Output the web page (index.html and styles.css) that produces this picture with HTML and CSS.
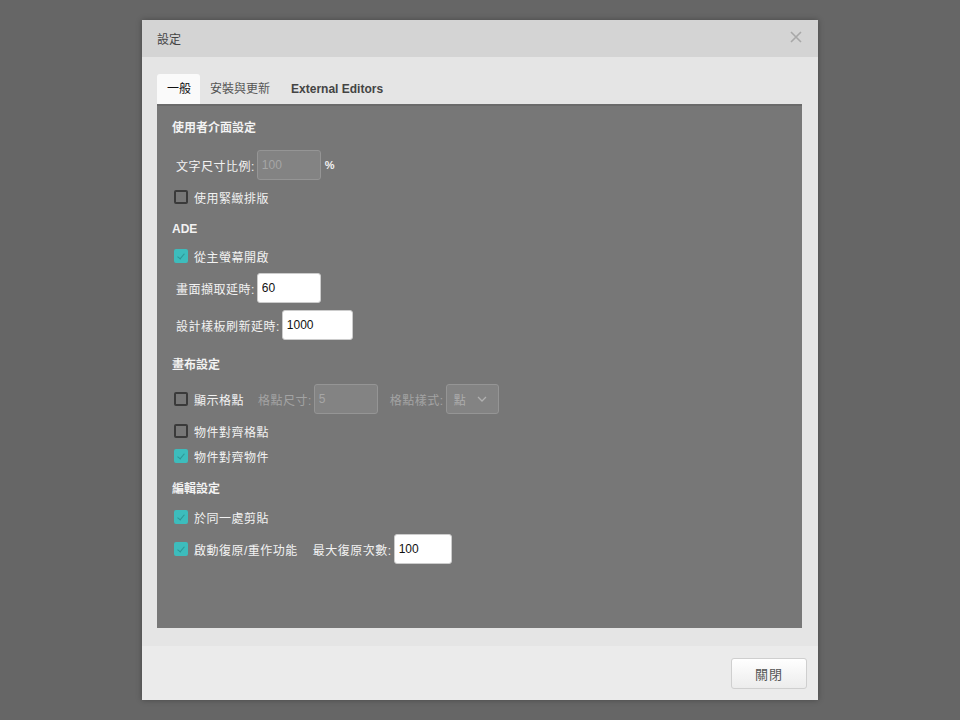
FILE: index.html
```html
<!DOCTYPE html>
<html>
<head>
    <title>設定</title>
    <link rel="stylesheet" href="styles.css">
</head>
<body>
    <div class="dialog">
        <div class="dialog-header">
            <span class="dialog-title">設定</span>
            <svg class="close-icon" width="12" height="12" viewBox="0 0 12 12">
                <path d="M1 1 L11 11 M11 1 L1 11" stroke="#a8a8a8" stroke-width="1.6" fill="none"/>
            </svg>
        </div>
        <div class="dialog-body">
            <div class="tabs">
                <div class="tab active">一般</div>
                <div class="tab">安裝與更新</div>
                <div class="tab tab-bold">External Editors</div>
            </div>
            <div class="panel">
                <div class="section-title first">使用者介面設定</div>
                <div class="item field-row">
                    <span class="field-label">文字尺寸比例:</span>
                    <input type="text" class="text-input disabled" value="100" style="width:64px" disabled>
                    <span class="unit">%</span>
                </div>
                <label class="item check-row">
                    <span class="checkbox"></span>
                    <span>使用緊緻排版</span>
                </label>

                <div class="section-title">ADE</div>
                <label class="item check-row close">
                    <span class="checkbox checked"></span>
                    <span>從主螢幕開啟</span>
                </label>
                <div class="item field-row">
                    <span class="field-label">畫面擷取延時:</span>
                    <input type="text" class="text-input" value="60" style="width:64px">
                </div>
                <div class="item field-row">
                    <span class="field-label">設計樣板刷新延時:</span>
                    <input type="text" class="text-input" value="1000" style="width:71px">
                </div>

                <div class="section-title canvas-title">畫布設定</div>
                <div class="item field-row">
                    <span class="checkbox"></span>
                    <span class="check-text">顯示格點</span>
                    <span class="field-label muted">格點尺寸:</span>
                    <input type="text" class="text-input disabled" value="5" style="width:64px" disabled>
                    <span class="field-label muted spaced">格點樣式:</span>
                    <div class="select disabled">
                        <span>點</span>
                        <svg width="10" height="6" viewBox="0 0 10 6">
                            <path d="M1 1 L5 5 L9 1" stroke="#b0b0b0" stroke-width="1.3" fill="none"/>
                        </svg>
                    </div>
                </div>
                <label class="item check-row">
                    <span class="checkbox"></span>
                    <span>物件對齊格點</span>
                </label>
                <label class="item check-row tight">
                    <span class="checkbox checked"></span>
                    <span>物件對齊物件</span>
                </label>

                <div class="section-title edit-title">編輯設定</div>
                <label class="item check-row close">
                    <span class="checkbox checked"></span>
                    <span>於同一處剪貼</span>
                </label>
                <div class="item field-row">
                    <span class="checkbox checked"></span>
                    <span class="check-text">啟動復原/重作功能</span>
                    <span class="field-label spaced-sm">最大復原次數:</span>
                    <input type="text" class="text-input" value="100" style="width:58px">
                </div>
            </div>
        </div>
        <div class="dialog-footer">
            <button class="close-button">關閉</button>
        </div>
    </div>
</body>
</html>
```

FILE: styles.css
```css
html, body {
    margin: 0;
    padding: 0;
}
body {
    background-color: #666666;
    height: 100vh;
    display: flex;
    align-items: center;
    justify-content: center;
    font-family: "Liberation Sans", "Noto Sans CJK TC", sans-serif;
    font-size: 12px;
}
.dialog {
    width: 676px;
    height: 680px;
    background-color: #e5e5e5;
    display: flex;
    flex-direction: column;
    box-shadow: 0 0 6px rgba(0, 0, 0, 0.3);
}
.dialog-header {
    height: 37px;
    background-color: #d4d4d4;
    display: flex;
    align-items: center;
    justify-content: space-between;
    padding: 0 16px 0 15px;
    flex-shrink: 0;
}
.dialog-title {
    color: #444;
    font-size: 12px;
    margin-top: -1px;
}
.close-icon {
    margin-top: -4px;
}
.dialog-body {
    flex: 1;
    padding: 17px 16px 18px 15px;
    display: flex;
    flex-direction: column;
}
.tabs {
    display: flex;
    height: 30px;
}
.tab {
    padding: 0 10px;
    line-height: 30px;
    color: #555;
    font-size: 12px;
}
.tab.active {
    background-color: #fafafa;
    color: #111;
    border-radius: 3px 3px 0 0;
    padding: 0 9px 0 10px;
}
.tab-bold {
    font-weight: bold;
    color: #444;
    padding-left: 11px;
}
.panel {
    flex: 1;
    background-color: #777777;
    border-top: 2px solid #6a6a6a;
    padding: 12px 15px 0 15px;
    color: #f2f2f2;
}
.section-title {
    height: 20px;
    line-height: 20px;
    font-weight: bold;
    font-size: 12px;
    margin-top: 12px;
}
.section-title.first {
    margin-top: 0;
}
.section-title.canvas-title {
    margin-top: 15px;
}
.section-title.edit-title {
    margin-top: 13px;
}
.item {
    display: flex;
    align-items: center;
    margin-top: 7px;
}
.section-title + .item {
    margin-top: 9px;
}
.check-row {
    height: 20px;
    padding-left: 2px;
}
.section-title + .check-row.close {
    margin-top: 7px;
}
.edit-title + .check-row.close {
    margin-top: 8px;
}
.check-row.tight {
    margin-top: 5px;
}
.field-row {
    height: 30px;
    padding-left: 2px;
}
.section-title + .field-row:not(:has(.checkbox)) {
    margin-top: 12px;
}
.field-label {
    margin-left: 2px;
    margin-right: 2px;
    letter-spacing: 0.5px;
}
.field-label.muted {
    color: #a3a3a3;
}
.field-label.spaced {
    margin-left: 12px;
}
.field-label.spaced-sm {
    margin-left: 3px;
}
.checkbox {
    width: 10px;
    height: 10px;
    border: 2px solid #3a3a3a;
    border-radius: 2px;
    margin-right: 6px;
    position: relative;
    flex-shrink: 0;
}
.checkbox.checked {
    background-color: #3dbcbc;
    border-color: #3dbcbc;
}
.checkbox.checked::after {
    content: "";
    position: absolute;
    left: 3px;
    top: 1px;
    width: 3px;
    height: 6px;
    border-right: 1px solid #2c9494;
    border-bottom: 1px solid #2c9494;
    transform: rotate(40deg);
}
.check-row span:last-child,
.check-text {
    letter-spacing: 0.5px;
}
.check-text {
    margin-right: 12px;
}
.text-input {
    height: 30px;
    box-sizing: border-box;
    border: 1px solid #cccccc;
    border-radius: 3px;
    background-color: #ffffff;
    padding: 0 4px;
    font-family: "Liberation Sans", sans-serif;
    font-size: 12px;
    color: #111;
}
.text-input.disabled {
    background-color: #838383;
    border-color: #959595;
    color: #a6a6a6;
}
.unit {
    margin-left: 4px;
    font-weight: bold;
    font-size: 11px;
}
.select {
    width: 53px;
    height: 30px;
    box-sizing: border-box;
    border: 1px solid #959595;
    border-radius: 3px;
    background-color: #838383;
    color: #acacac;
    display: flex;
    align-items: center;
    justify-content: space-between;
    padding: 0 11px 0 7px;
}
.dialog-footer {
    height: 54px;
    background-color: #ebebeb;
    display: flex;
    align-items: center;
    justify-content: flex-end;
    padding-right: 11px;
    flex-shrink: 0;
}
.close-button {
    width: 76px;
    height: 31px;
    border: 1px solid #cfcfcf;
    border-radius: 3px;
    background: linear-gradient(#ffffff, #ececec);
    color: #555;
    font-family: "Liberation Sans", "Noto Sans CJK TC", sans-serif;
    font-size: 13px;
    letter-spacing: 1px;
}
```
